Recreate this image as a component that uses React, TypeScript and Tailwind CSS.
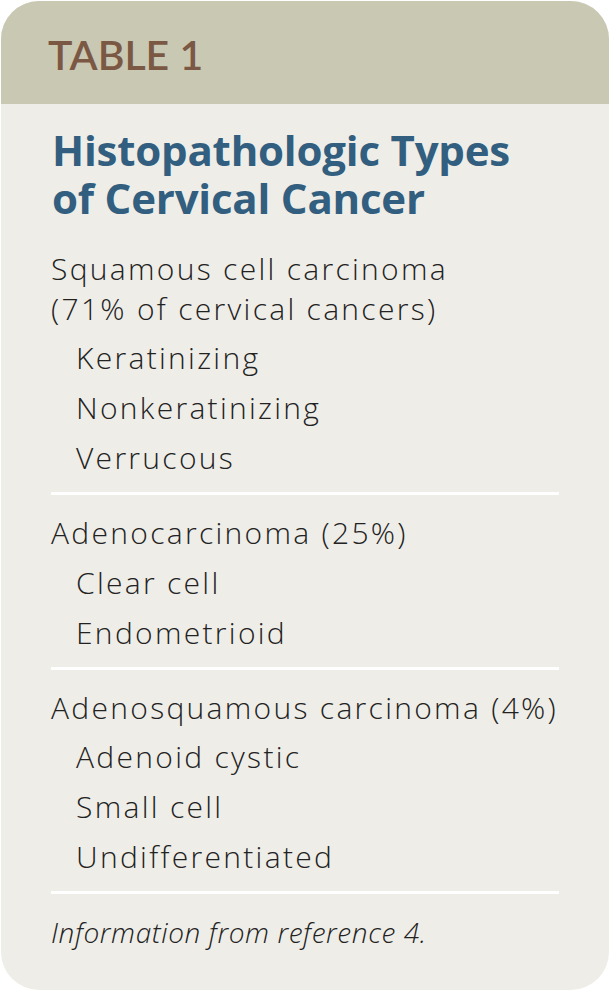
import React from "react";

type Section = { head: string[]; items: string[] };

const sections: Section[] = [
  { head: ["Squamous cell carcinoma", "(71% of cervical cancers)"], items: ["Keratinizing", "Nonkeratinizing", "Verrucous"] },
  { head: ["Adenocarcinoma (25%)"], items: ["Clear cell", "Endometrioid"] },
  { head: ["Adenosquamous carcinoma (4%)"], items: ["Adenoid cystic", "Small cell", "Undifferentiated"] },
];

export default function App() {
  return (
    <div className="w-[611px] h-[992px] bg-white p-[1px]">
      <div className="w-[608px] h-[989px] rounded-[38px] overflow-hidden bg-[#eeede7] flex flex-col">
        <div className="h-[103px] bg-[#c9c8b3] flex items-center pl-[47px] pt-[4px]">
          <span
            className="text-[#7b5843] text-[41px] font-semibold"
            style={{ fontFamily: "Lato, sans-serif" }}
          >
            TABLE 1
          </span>
        </div>
        <div className="px-[50px] pt-[22px]" style={{ fontFamily: "'Open Sans', sans-serif" }}>
          <h1 className="text-[#325e7f] text-[42px] font-bold leading-[48px] pl-[1px] tracking-[-0.2px]">
            <div>Histopathologic Types</div>
            <div>of Cervical Cancer</div>
          </h1>
          <div className="mt-[22px] w-[508px] text-[30px] font-light text-[#222] tracking-[2.3px]">
            {sections.map((s, i) => (
              <div key={i}>
                <div className="py-[5px] leading-[39.5px]">
                  {s.head.map((h) => (
                    <div key={h} className="whitespace-nowrap">{h}</div>
                  ))}
                </div>
                <div className="pl-[25px]">
                  {s.items.map((it) => (
                    <div key={it} className="h-[50px] leading-[50px]">
                      {it}
                    </div>
                  ))}
                </div>
                <div className="h-[3px] bg-white mt-[9px] mb-[13px]" />
              </div>
            ))}
            <div className="h-[50px] leading-[50px] text-[28px] italic tracking-[0.6px]">
              Information from reference 4.
            </div>
          </div>
        </div>
      </div>
    </div>
  );
}
